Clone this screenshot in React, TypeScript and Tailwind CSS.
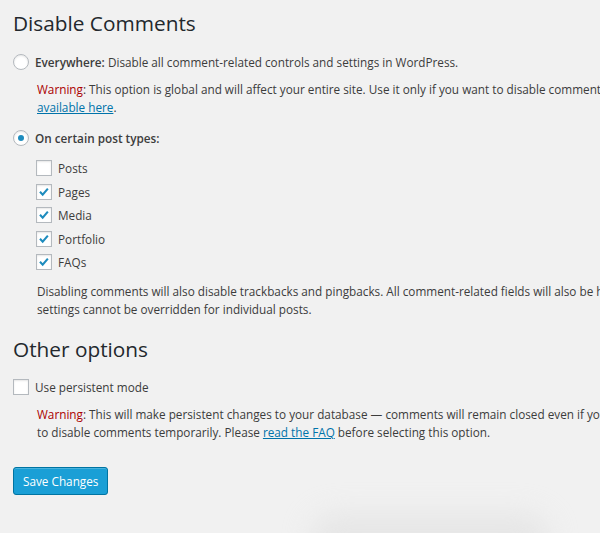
import React from 'react'

function Radio({ checked }: { checked?: boolean }) {
  return (
    <span className="flex h-4 w-4 shrink-0 items-center justify-center rounded-full border border-[#b4b9be] bg-white shadow-[inset_0_1px_2px_rgba(0,0,0,0.1)]">
      {checked && <span className="h-[6px] w-[6px] rounded-full bg-[#1e8cbe]" />}
    </span>
  )
}

function Checkbox({ checked }: { checked?: boolean }) {
  return (
    <span className="flex h-4 w-4 shrink-0 items-center justify-center border border-[#b4b9be] bg-white shadow-[inset_0_1px_2px_rgba(0,0,0,0.1)]">
      {checked && (
        <svg viewBox="0 0 16 16" className="h-4 w-4">
          <path d="M3.4 7.8 L6.5 11 L12.4 4.2" fill="none" stroke="#1e8cbe" strokeWidth="2.4" />
        </svg>
      )}
    </span>
  )
}

const postTypes = [
  { name: 'Posts', checked: false },
  { name: 'Pages', checked: true },
  { name: 'Media', checked: true },
  { name: 'Portfolio', checked: true },
  { name: 'FAQs', checked: true },
]

export default function App() {
  return (
    <div
      className="relative h-[533px] w-[600px] overflow-hidden bg-[#f1f1f1] text-[11.75px] text-[#3c3c3c]"
      style={{ fontFamily: '"Open Sans", "Noto Sans", sans-serif' }}
    >
      <div className="flex flex-col whitespace-nowrap pl-[13px]">
        {/* Disable Comments */}
        <h1 className="mt-[9px] text-[20.8px] leading-[29px] text-[#23282d]">Disable Comments</h1>

        <div className="mt-[16px] flex h-4 items-center gap-[6px]">
          <Radio />
          <span className="leading-[18px]">
            <strong className="font-semibold">Everywhere:</strong> Disable all comment-related controls and settings in WordPress.
          </span>
        </div>
        <p className="mt-[10px] pl-6 leading-[18px]">
          <span className="text-[#a00]">Warning</span>: This option is global and will affect your entire site. Use it only if you want to disable comments everywhere.
          <br />
          <a href="#" className="text-[#0073aa] underline">available here</a>.
        </p>

        <div className="mt-[14px] flex h-4 items-center gap-[6px]">
          <Radio checked />
          <strong className="font-semibold leading-[18px]">On certain post types:</strong>
        </div>

        <div className="mt-[14px] flex flex-col gap-[7.5px] pl-[23px]">
          {postTypes.map((t) => (
            <div key={t.name} className="flex h-4 items-center gap-[6px]">
              <Checkbox checked={t.checked} />
              <span className="leading-[18px]">{t.name}</span>
            </div>
          ))}
        </div>

        <p className="mt-[12px] pl-6 leading-[18px]">
          Disabling comments will also disable trackbacks and pingbacks. All comment-related fields will also be hidden from the edit screens.
          <br />
          settings cannot be overridden for individual posts.
        </p>

        {/* Other options */}
        <h2 className="mt-[17px] text-[20.8px] leading-[29px] text-[#23282d]">Other options</h2>

        <div className="mt-[15px] flex h-4 items-center gap-[6px]">
          <Checkbox />
          <span className="leading-[18px]">Use persistent mode</span>
        </div>
        <p className="mt-[10px] pl-6 leading-[18px]">
          <span className="text-[#a00]">Warning</span>: This will make persistent changes to your database — comments will remain closed even if you later disable the plugin!
          <br />
          to disable comments temporarily. Please <a href="#" className="text-[#0073aa] underline">read the FAQ</a> before selecting this option.
        </p>

        <div className="mt-[26px]">
          <button className="h-[28px] rounded-[3px] border border-[#0074a2] bg-[#1a9fd6] px-[9px] text-[11.75px] leading-[26px] text-white shadow-[inset_0_1px_0_rgba(120,200,230,0.5)]">
            Save Changes
          </button>
        </div>
      </div>

      {/* faint shadow near the bottom edge */}
      <div className="pointer-events-none absolute bottom-[-30px] left-[310px] h-[50px] w-[240px] rounded-full bg-[#dcdcdc] opacity-50 blur-[14px]" />
    </div>
  )
}
